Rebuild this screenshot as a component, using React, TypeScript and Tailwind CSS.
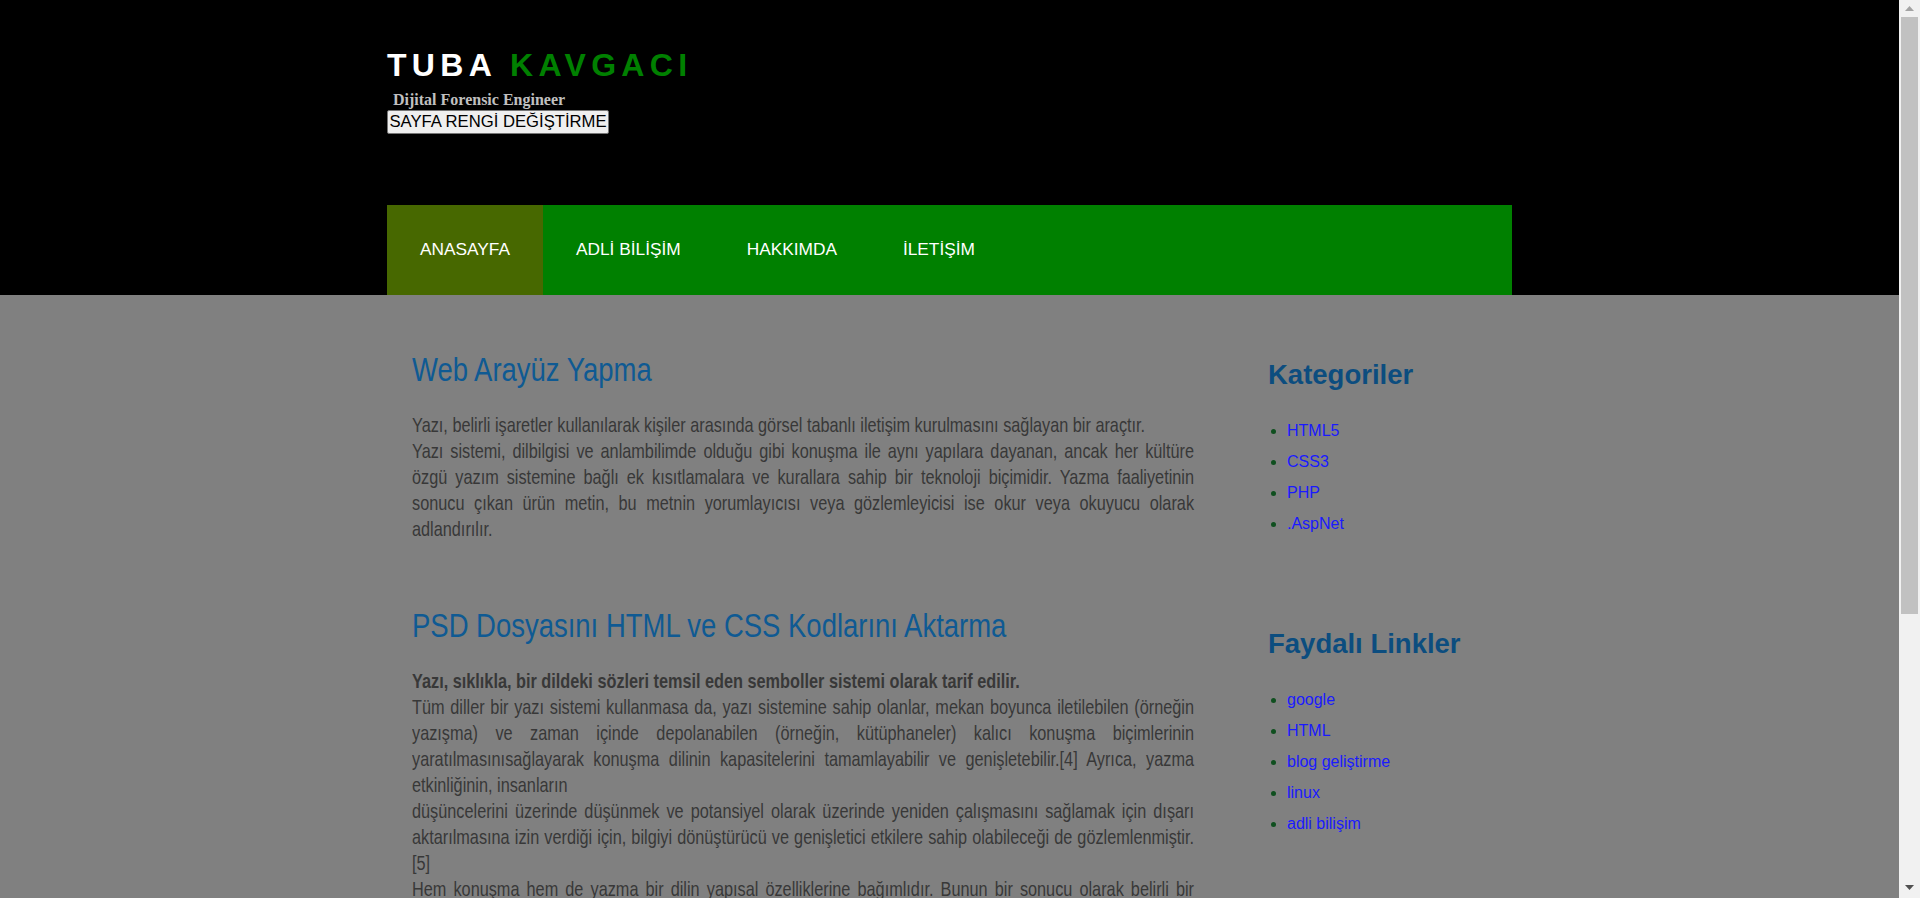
const menu = ["ANASAYFA", "ADLİ BİLİŞİM", "HAKKIMDA", "İLETİŞİM"];
const kategoriler = ["HTML5", "CSS3", "PHP", ".AspNet"];
const linkler = ["google", "HTML", "blog geliştirme", "linux", "adli bilişim"];

const Scrollbar = () => (
  <div className="flex h-full w-[21px] shrink-0 flex-col bg-[#f1f1f1]">
    <div className="flex h-[17px] items-center justify-center">
      <svg width="9" height="5" viewBox="0 0 9 5">
        <polygon points="4.5,0 9,5 0,5" fill="#a3a3a3" />
      </svg>
    </div>
    <div className="mx-[2px] h-[597px] bg-[#c1c1c1]" />
    <div className="flex-1" />
    <div className="flex h-[21px] items-center justify-center">
      <svg width="9" height="5" viewBox="0 0 9 5">
        <polygon points="0,0 9,0 4.5,5" fill="#505050" />
      </svg>
    </div>
  </div>
);

const App = () => {
  return (
    <div className="flex h-screen overflow-hidden font-['Liberation_Sans',Arial,sans-serif]">
      <div className="h-full flex-1 overflow-y-auto bg-[#808080] [scrollbar-width:none]">
        {/* ust kisim */}
        <header className="bg-black">
          <div className="mx-auto w-[1125px] pt-[47px]">
            <h1 className="text-[32px] font-bold leading-[37px] tracking-[5.3px] text-white">
              TUBA <span className="text-[#008000]">KAVGACI</span>
            </h1>
            <p className="mt-[7px] pl-[6px] font-['Liberation_Serif','Times_New_Roman',serif] text-[16px] font-bold leading-[18px] text-[#c0c0c0]">
              Dijital Forensic Engineer
            </p>
            <button className="mt-[1px] h-[24px] w-[222px] whitespace-nowrap rounded-[2px] border border-[#767676] bg-[#efefef] px-0 text-[16.67px] leading-[20px] text-black">
              SAYFA RENGİ DEĞİŞTİRME
            </button>
            <nav className="mt-[71px] flex h-[90px] bg-[#008000]">
              {menu.map((item, i) => (
                <a
                  key={item}
                  href="#"
                  className={`flex items-center px-[33px] text-[17.3px] text-white ${
                    i === 0 ? "bg-[#476800]" : ""
                  }`}
                >
                  {item}
                </a>
              ))}
            </nav>
          </div>
        </header>

        {/* icerik */}
        <div className="mx-auto flex w-[1125px] pb-[40px]">
          <main className="w-[807px] shrink-0 pl-[25px] pt-[56px]">
            {/* Arial Narrow yok, normal yaziyi yatayda daraltiyoruz */}
            <div className="w-[953.7px] origin-top-left scale-x-[0.82] text-[19.85px] leading-[26px] text-[#383838]">
              <h2 className="text-[33.5px] leading-[38px] text-[#0f5a93]">Web Arayüz Yapma</h2>
              <p className="mt-[23px] text-justify">
                Yazı, belirli işaretler kullanılarak kişiler arasında görsel tabanlı iletişim kurulmasını sağlayan bir
                araçtır.
                <br />
                Yazı sistemi, dilbilgisi ve anlambilimde olduğu gibi konuşma ile aynı yapılara dayanan, ancak her
                kültüre özgü yazım sistemine bağlı ek kısıtlamalara ve kurallara sahip bir teknoloji biçimidir. Yazma
                faaliyetinin sonucu çıkan ürün metin, bu metnin yorumlayıcısı veya gözlemleyicisi ise okur veya okuyucu
                olarak adlandırılır.
              </p>

              <h2 className="mt-[65px] text-[33.5px] leading-[38px] text-[#0f5a93]">
                PSD Dosyasını HTML ve CSS Kodlarını Aktarma
              </h2>
              <p className="mt-[23px] text-justify">
                <b>Yazı, sıklıkla, bir dildeki sözleri temsil eden semboller sistemi olarak tarif edilir.</b>
                <br />
                Tüm diller bir yazı sistemi kullanmasa da, yazı sistemine sahip olanlar, mekan boyunca iletilebilen
                (örneğin yazışma) ve zaman içinde depolanabilen (örneğin, kütüphaneler) kalıcı konuşma biçimlerinin
                yaratılmasınısağlayarak konuşma dilinin kapasitelerini tamamlayabilir ve genişletebilir.[4] Ayrıca,
                yazma etkinliğinin, insanların
                <br />
                düşüncelerini üzerinde düşünmek ve potansiyel olarak üzerinde yeniden çalışmasını sağlamak için dışarı
                aktarılmasına izin verdiği için, bilgiyi dönüştürücü ve genişletici etkilere sahip olabileceği de
                gözlemlenmiştir.[5]
                <br />
                Hem konuşma hem de yazma bir dilin yapısal özelliklerine bağımlıdır. Bunun bir sonucu olarak belirli
                bir dilde yazılmış bir metni okuyabilmek için o dilin kurallarını bilmek gerekir. Yazı sistemleri genel
                olarak alfabeler, hece yazıları ve logografik sistemler olmak üzere üç grupta incelenir; bazı sistemler
                bu grupların birkaçının özelliklerini bir arada taşır.
                <br />
                Yazının ortaya çıkışı, insanlık tarihinin en önemli dönüm noktalarından biri kabul edilir. Yazılı
                belgelerin bulunduğu dönemler tarih, öncesindeki dönemler ise tarih öncesi olarak adlandırılır.
                Günümüzde yazı, kâğıt üzerindeki işaretlerin yanı sıra ekranlarda görüntülenen dijital metinleri de
                kapsayacak biçimde kullanılmaktadır.
              </p>
            </div>
          </main>

          <aside className="ml-[74px] w-[244px] pt-[64px]">
            <h3 className="text-[27.5px] font-bold leading-[31px] text-[#0c4d7f]">Kategoriler</h3>
            <ul className="mt-[25px] list-disc pl-[19px] text-[16px] leading-[31px] marker:text-[#0f4f1f]">
              {kategoriler.map((k) => (
                <li key={k}>
                  <a href="#" className="text-[#1a1aff]">
                    {k}
                  </a>
                </li>
              ))}
            </ul>

            <h3 className="mt-[89px] text-[27.5px] font-bold leading-[31px] text-[#0c4d7f]">Faydalı Linkler</h3>
            <ul className="mt-[25px] list-disc pl-[19px] text-[16px] leading-[31px] marker:text-[#0f4f1f]">
              {linkler.map((k) => (
                <li key={k}>
                  <a href="#" className="text-[#1a1aff]">
                    {k}
                  </a>
                </li>
              ))}
            </ul>
          </aside>
        </div>
      </div>
      <Scrollbar />
    </div>
  );
};

export default App;
